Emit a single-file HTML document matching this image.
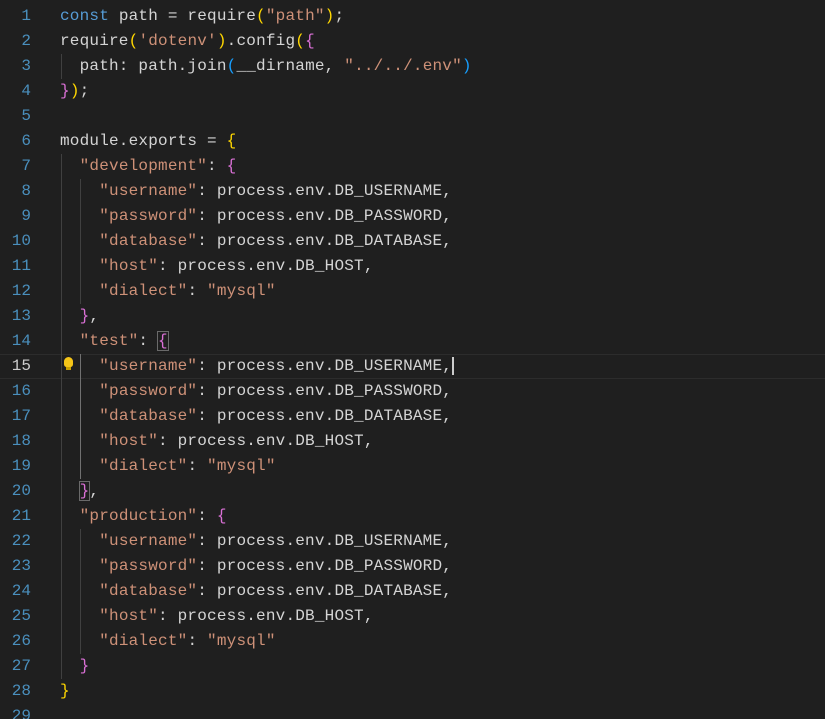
<!DOCTYPE html>
<html><head><meta charset="utf-8"><style>
html,body{margin:0;padding:0;background:#1f1f1f;width:825px;height:719px;overflow:hidden}
body{font-family:"Liberation Mono","DejaVu Sans Mono",monospace;font-size:16px;color:#d4d4d4;position:relative}
.ln{position:absolute;left:0;width:31px;text-align:right;color:#4a8fbd}
.l{position:absolute;left:60px;white-space:pre;height:25px;line-height:25px;letter-spacing:0.2px}
.n{position:absolute;white-space:pre;height:25px;line-height:25px}
.s{color:#ce9178}.k{color:#569cd6}.y{color:#ffd700}.p{color:#da70d6}.b{color:#179fff}
.g{position:absolute;width:1px;background:#404040}
.cur{position:absolute;left:0;right:0;top:354px;height:23px;border-top:1px solid #2c2c2c;border-bottom:1px solid #2c2c2c}
.box{outline:1px solid #6a6a6a}
</style></head><body>
<div class="cur"></div>
<div class="g" style="left:61px;top:54px;height:25px"></div>
<div class="g" style="left:61px;top:154px;height:525px"></div>
<div class="g" style="left:80px;top:179px;height:125px"></div>
<div class="g" style="left:80px;top:354px;height:125px;background:#707070"></div>
<div class="g" style="left:80px;top:529px;height:125px"></div>
<div id="c"></div>
<script>
var L=[
'<span class="k">const</span> path = require<span class="y">(</span><span class="s">"path"</span><span class="y">)</span>;',
'require<span class="y">(</span><span class="s">\'dotenv\'</span><span class="y">)</span>.config<span class="y">(</span><span class="p">{</span>',
'  path: path.join<span class="b">(</span>__dirname, <span class="s">"../../.env"</span><span class="b">)</span>',
'<span class="p">}</span><span class="y">)</span>;',
'',
'module.exports = <span class="y">{</span>',
'  <span class="s">"development"</span>: <span class="p">{</span>',
'    <span class="s">"username"</span>: process.env.DB_USERNAME,',
'    <span class="s">"password"</span>: process.env.DB_PASSWORD,',
'    <span class="s">"database"</span>: process.env.DB_DATABASE,',
'    <span class="s">"host"</span>: process.env.DB_HOST,',
'    <span class="s">"dialect"</span>: <span class="s">"mysql"</span>',
'  <span class="p">}</span>,',
'  <span class="s">"test"</span>: <span class="p box">{</span>',
'    <span class="s">"username"</span>: process.env.DB_USERNAME,<span style="border-left:2px solid #ccc"></span>',
'    <span class="s">"password"</span>: process.env.DB_PASSWORD,',
'    <span class="s">"database"</span>: process.env.DB_DATABASE,',
'    <span class="s">"host"</span>: process.env.DB_HOST,',
'    <span class="s">"dialect"</span>: <span class="s">"mysql"</span>',
'  <span class="p box">}</span>,',
'  <span class="s">"production"</span>: <span class="p">{</span>',
'    <span class="s">"username"</span>: process.env.DB_USERNAME,',
'    <span class="s">"password"</span>: process.env.DB_PASSWORD,',
'    <span class="s">"database"</span>: process.env.DB_DATABASE,',
'    <span class="s">"host"</span>: process.env.DB_HOST,',
'    <span class="s">"dialect"</span>: <span class="s">"mysql"</span>',
'  <span class="p">}</span>',
'<span class="y">}</span>',
''];
var h='';
for(var i=0;i<L.length;i++){var t=4+i*25;
h+='<div class="n ln" style="top:'+t+'px'+(i==14?';color:#cccccc':'')+'">'+(i+1)+'</div>';
h+='<div class="l" style="top:'+t+'px">'+L[i]+'</div>';}
document.getElementById('c').innerHTML=h;
</script>
<div style="position:absolute;left:64px;top:357px;width:9px;height:10px;background:#f5c518;border-radius:5px 5px 3px 3px"></div>
<div style="position:absolute;left:66px;top:367px;width:5px;height:3px;background:#c9a000"></div>
</body></html>
